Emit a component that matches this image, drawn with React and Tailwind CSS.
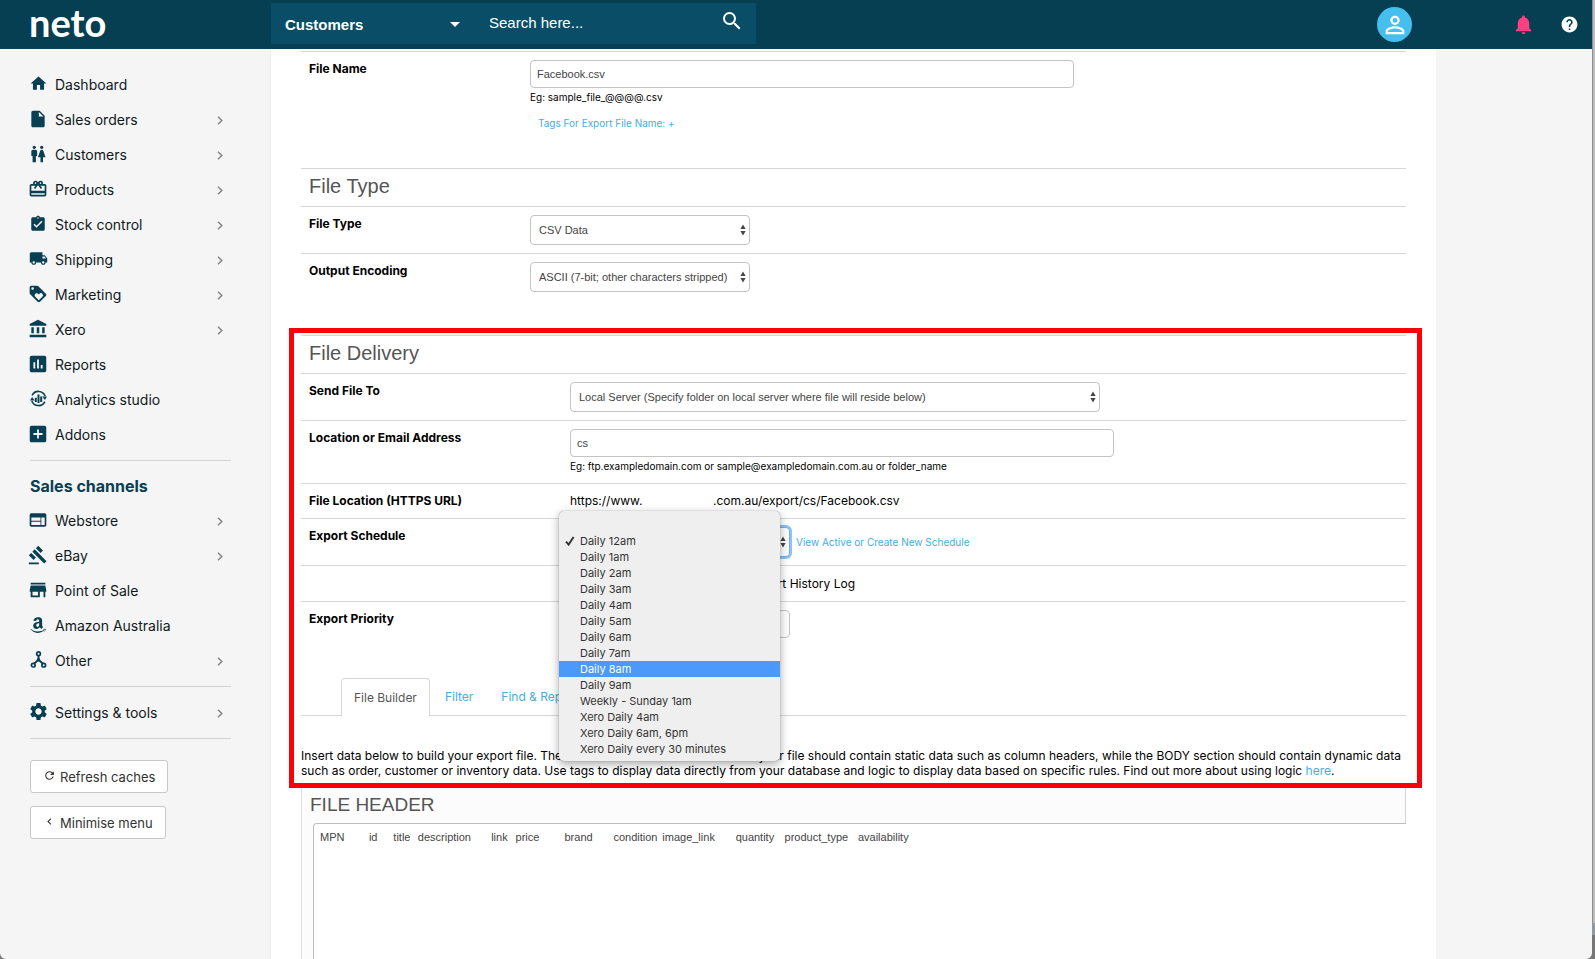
import React from "react";
import {
  MdHome,
  MdInsertDriveFile,
  MdWc,
  MdCardGiftcard,
  MdAssignmentTurnedIn,
  MdLocalShipping,
  MdLoyalty,
  MdAccountBalance,
  MdAssessment,
  MdAddBox,
  MdWeb,
  MdGavel,
  MdStore,
  MdSettings,
  MdRefresh,
  MdChevronLeft,
  MdSearch,
  MdArrowDropDown,
  MdPersonOutline,
  MdNotifications,
  MdHelp,
} from "react-icons/md";
import { FaAmazon } from "react-icons/fa";

function AnalyticsIcon({ size }) {
  return (
    <svg
      width={size}
      height={size}
      viewBox="0 0 24 24"
      fill="none"
      stroke="currentColor"
      strokeWidth="2.2"
      className="shrink-0"
    >
      <path d="M3 7.6A10 10 0 0 1 21.4 8.6" />
      <path d="M21 16.4A10 10 0 0 1 2.6 15.4" />
      <path d="M17.4 9.2H24l-3 5z" fill="currentColor" stroke="none" />
      <path d="M6.6 14.8H0l3-5z" fill="currentColor" stroke="none" />
      <path d="M8.2 11v6M12 6.4v12M15.8 9v8" strokeWidth="2.8" />
    </svg>
  );
}

function NodesIcon({ size }) {
  return (
    <svg
      width={size}
      height={size}
      viewBox="0 0 24 24"
      fill="none"
      stroke="currentColor"
      strokeWidth="2.4"
      className="shrink-0"
    >
      <circle cx="12" cy="3.8" r="2.6" />
      <circle cx="4.6" cy="20" r="2.6" />
      <circle cx="19.4" cy="20" r="2.6" />
      <path d="M12 6.8v6M12 12.4l-6 5.2M12 12.4l6 5.2" strokeWidth="2.8" />
      <circle cx="12" cy="12.4" r="2.4" fill="currentColor" stroke="none" />
    </svg>
  );
}

function Chevron() {
  return (
    <svg width="6" height="9" viewBox="0 0 6 9" fill="none" stroke="currentColor" strokeWidth="1.5">
      <path d="M1 0.7L4.8 4.5L1 8.3" />
    </svg>
  );
}

const mainNav = [
  { label: "Dashboard", icon: MdHome, size: 19 },
  { label: "Sales orders", icon: MdInsertDriveFile, size: 20, more: true },
  { label: "Customers", icon: MdWc, size: 20, more: true },
  { label: "Products", icon: MdCardGiftcard, size: 20, more: true },
  { label: "Stock control", icon: MdAssignmentTurnedIn, size: 18, more: true },
  { label: "Shipping", icon: MdLocalShipping, size: 19, more: true },
  { label: "Marketing", icon: MdLoyalty, size: 20, more: true },
  { label: "Xero", icon: MdAccountBalance, size: 20, more: true },
  { label: "Reports", icon: MdAssessment, size: 22 },
  { label: "Analytics studio", icon: AnalyticsIcon, size: 17 },
  { label: "Addons", icon: MdAddBox, size: 22 },
];

const channelNav = [
  { label: "Webstore", icon: MdWeb, size: 20, more: true },
  { label: "eBay", icon: MdGavel, size: 20, more: true },
  { label: "Point of Sale", icon: MdStore, size: 22 },
  { label: "Amazon Australia", icon: FaAmazon, size: 18 },
  { label: "Other", icon: NodesIcon, size: 17, more: true },
];

const schedules = [
  "Daily 12am",
  "Daily 1am",
  "Daily 2am",
  "Daily 3am",
  "Daily 4am",
  "Daily 5am",
  "Daily 6am",
  "Daily 7am",
  "Daily 8am",
  "Daily 9am",
  "Weekly - Sunday 1am",
  "Xero Daily 4am",
  "Xero Daily 6am, 6pm",
  "Xero Daily every 30 minutes",
];

const columns = [
  "MPN",
  "id",
  "title",
  "description",
  "link",
  "price",
  "brand",
  "condition",
  "image_link",
  "quantity",
  "product_type",
  "availability",
].join("\t");

function NavItem({ label, icon: Icon, size, more }) {
  return (
    <a href="#" className="flex h-[35px] items-center text-[14px] text-[#10191d]">
      <span className="mr-[9px] flex w-4 shrink-0 items-center justify-center pb-[2px] text-[#083f53]">
        <Icon size={size} className="shrink-0" />
      </span>
      <span className="flex-1">{label}</span>
      {more && (
        <span className="pt-[2px] pr-[6px] text-[#858585]">
          <Chevron />
        </span>
      )}
    </a>
  );
}

function Sidebar() {
  return (
    <nav className="w-[271px] shrink-0 border-r border-[#ececec] pt-[18px] pr-[39px] pl-[30px]">
      <div className="pr-[2px]">
        {mainNav.map((n) => (
          <NavItem key={n.label} {...n} />
        ))}
      </div>
      <hr className="mt-2 border-[#d3d3d3]" />
      <h2 className="mt-[15px] mb-[7px] text-[16px] leading-5 font-bold text-[#083f53]">Sales channels</h2>
      <div className="pr-[2px]">
        {channelNav.map((n) => (
          <NavItem key={n.label} {...n} />
        ))}
      </div>
      <hr className="mt-2 border-[#d3d3d3]" />
      <div className="py-[8px] pr-[2px]">
        <NavItem label="Settings & tools" icon={MdSettings} size={21} more />
      </div>
      <hr className="border-[#d3d3d3]" />
      <div className="mt-[21px] flex flex-col items-start gap-[13px] text-[13px] text-[#333]">
        <button className="flex h-[33px] items-center gap-1 rounded-[3px] border border-[#c8c8c8] bg-white px-3 pt-[2px]">
          <MdRefresh size={13} className="mb-1" /> Refresh caches
        </button>
        <button className="flex h-[33px] items-center gap-1 rounded-[3px] border border-[#c8c8c8] bg-white px-3 pt-[2px]">
          <MdChevronLeft size={13} className="mb-1" /> Minimise menu
        </button>
      </div>
    </nav>
  );
}

function TopBar() {
  return (
    <header className="flex h-[49px] shrink-0 items-center bg-[#073f52] text-white">
      <a
        href="#"
        className="flex w-[271px] shrink-0 items-center pb-[6px] pl-[29px] font-['Lato',sans-serif] text-[38px] leading-[46px] font-bold"
      >
        neto
      </a>
      <div className="mb-[2px] flex h-[41px] w-[485px] items-center bg-[#0a4d66] font-['Liberation_Sans',sans-serif] text-[15px]">
        <div className="relative flex w-[202px] items-center">
          <select
            aria-label="Search in"
            className="w-full appearance-none bg-transparent pt-[3px] pl-[14px] font-bold outline-none"
          >
            <option>Customers</option>
          </select>
          <MdArrowDropDown size={24} className="pointer-events-none absolute right-[6px]" />
        </div>
        <input
          type="search"
          aria-label="Search"
          placeholder="Search here..."
          className="min-w-0 flex-1 bg-transparent pl-[16px] outline-none placeholder:text-white"
        />
        <button aria-label="Search" className="mr-[12px] pb-[6px]">
          <MdSearch size={24} />
        </button>
      </div>
      <div className="ml-auto flex items-center pr-[13px]">
        <button
          aria-label="Account"
          className="mr-[100px] flex h-[35px] w-[35px] items-center justify-center rounded-full bg-[#45c0ee]"
        >
          <MdPersonOutline size={28} />
        </button>
        <button aria-label="Notifications" className="mr-[25px] text-[#ff4080]">
          <MdNotifications size={23} />
        </button>
        <button aria-label="Help">
          <MdHelp size={19} />
        </button>
      </div>
    </header>
  );
}

function Row({ label, htmlFor, wide, className = "", children }) {
  return (
    <div
      className={
        "grid border-t border-[#d6d6d6] py-2 " +
        (wide ? "grid-cols-[269px_1fr] " : "grid-cols-[229px_1fr] ") +
        className
      }
    >
      <label htmlFor={htmlFor} className="pl-2 text-[12px] leading-[18px] font-bold text-black">
        {label}
      </label>
      <div>{children}</div>
    </div>
  );
}

function SectionTitle({ children }) {
  return (
    <h2 className="h-[38px] border-t border-[#d6d6d6] pl-2 font-['Liberation_Sans',sans-serif] text-[20px] leading-[34px] text-[#555]">
      {children}
    </h2>
  );
}

function SelectBox({ id, width, value, focused }) {
  return (
    <div className={"relative " + width}>
      <select
        id={id}
        className={
          "h-[30px] w-full appearance-none rounded-[4px] border bg-white pr-5 pl-2 font-['Liberation_Sans',sans-serif] text-[11px] text-[#444] outline-none " +
          (focused ? "border-[#6fb0f5] ring-2 ring-[#8fc2f8]" : "border-[#c4c4c4]")
        }
      >
        <option>{value}</option>
      </select>
      <svg
        width="6"
        height="12"
        viewBox="0 0 6 12"
        className="pointer-events-none absolute top-[9px] right-[4px] text-[#444]"
        fill="currentColor"
      >
        <path d="M3 0.5L5.6 5H.4zM3 11.5L.4 7h5.2z" />
      </svg>
    </div>
  );
}

const inputClass =
  "block h-[28px] rounded-[4px] border border-[#c4c4c4] bg-white px-[6px] font-['Liberation_Sans',sans-serif] text-[11px] text-[#444] outline-none";

function ScheduleMenu() {
  return (
    <ul
      role="listbox"
      aria-label="Export schedule options"
      className="absolute -top-[16px] -left-[11px] z-10 w-[221px] rounded-[5px] bg-[#efefef] pt-[6px] pb-[4px] text-[11px] leading-4 text-[#333] shadow-[0_3px_10px_rgba(0,0,0,0.35),0_0_1px_rgba(0,0,0,0.5)]"
    >
      <li role="option" aria-label="None" aria-selected="false" className="h-4" />
      {schedules.map((s) => (
        <li
          key={s}
          role="option"
          aria-selected={s === "Daily 12am"}
          className={"flex h-4 items-center " + (s === "Daily 8am" ? "bg-[#4a99fb] text-white" : "")}
        >
          <span className="flex w-[21px] justify-center">
            {s === "Daily 12am" && (
              <svg width="10" height="10" viewBox="0 0 10 10" fill="none" stroke="currentColor" strokeWidth="1.9">
                <path d="M1 5.6L3.6 8.6 8.6 1" />
              </svg>
            )}
          </span>
          {s}
        </li>
      ))}
    </ul>
  );
}

function ExportForm() {
  return (
    <main className="flex min-w-0 max-w-[1165px] flex-1 flex-col bg-white pt-[2px] pr-[30px] pl-[30px] text-[12px] text-black">
      <Row label="File Name" htmlFor="file-name" className="h-[117px]">
        <input id="file-name" defaultValue="Facebook.csv" className={inputClass + " w-[544px] max-w-full"} />
        <p className="mt-px text-[10px] leading-4">Eg: sample_file_@@@@.csv</p>
        <a href="#" className="mt-[10px] ml-2 inline-block text-[10px] leading-4 text-[#45aee0]">
          Tags For Export File Name: +
        </a>
      </Row>

      <SectionTitle>File Type</SectionTitle>
      <Row label="File Type" htmlFor="file-type">
        <SelectBox id="file-type" width="w-[220px]" value="CSV Data" />
      </Row>
      <Row label="Output Encoding" htmlFor="encoding">
        <SelectBox id="encoding" width="w-[220px]" value="ASCII (7-bit; other characters stripped)" />
      </Row>

      <section className="relative mt-[35px]">
        <div className="pointer-events-none absolute -top-[7px] -right-[16px] -bottom-[5px] -left-[12px] z-20 border-5 border-[#fb0007]" />
        <SectionTitle>File Delivery</SectionTitle>
        <Row wide label="Send File To" htmlFor="send-to">
          <SelectBox
            id="send-to"
            width="w-[530px] max-w-full"
            value="Local Server (Specify folder on local server where file will reside below)"
          />
        </Row>
        <Row wide label="Location or Email Address" htmlFor="location">
          <input id="location" defaultValue="cs" className={inputClass + " w-[544px] max-w-full"} />
          <p className="mt-px mb-px text-[10px] leading-4">
            Eg: ftp.exampledomain.com or sample@exampledomain.com.au or folder_name
          </p>
        </Row>
        <Row wide label="File Location (HTTPS URL)">
          <p className="leading-[18px]">
            <span className="inline-block w-[143px]">https://www.</span>.com.au/export/cs/Facebook.csv
          </p>
        </Row>
        <Row wide label="Export Schedule" htmlFor="schedule">
          <div className="relative flex items-center gap-[6px]">
            <SelectBox id="schedule" width="w-[220px]" value="Daily 12am" focused />
            <a href="#" className="text-[10px] text-[#45aee0]">
              View Active or Create New Schedule
            </a>
            <ScheduleMenu />
          </div>
        </Row>
        <Row wide>
          <label className="flex w-[285px] items-center justify-end leading-[19px]">
            <input type="checkbox" className="mr-auto" />
            Clear Export History Log
          </label>
        </Row>
        <Row wide label="Export Priority" htmlFor="priority">
          <input id="priority" className={inputClass + " w-[220px]"} />
        </Row>

        <div className="mt-[32px] flex h-[38px] items-stretch border-b border-[#d6d6d6] pl-10">
          <button className="-mb-px rounded-t-[4px] border border-b-0 border-[#d6d6d6] bg-white px-3 text-[#555]">
            File Builder
          </button>
          <button className="px-[15px] text-[#45aee0]">Filter</button>
          <button className="px-[13px] text-[#45aee0]">Find &amp; Replace</button>
        </div>
        <p className="mt-[32px] pb-[5px] leading-[15px]">
          Insert data below to build your export file. The HEADER and FOOTER sections of your file should contain
          static data such as column headers, while the BODY section should contain dynamic data such as order, customer
          or inventory data. Use tags to display data directly from your database and logic to display data based on
          specific rules. Find out more about using logic{" "}
          <a href="#" className="text-[#45aee0]">
            here
          </a>
          .
        </p>
      </section>

      <section className="flex flex-1 flex-col border-l border-[#e2e2e2] bg-white">
        <h2 className="h-[40px] border-r border-[#d6d6d6] bg-[#fcfcfc] pl-[8px] font-['Liberation_Sans',sans-serif] text-[19px] leading-[44px] text-[#555]">
          <label htmlFor="header-body">FILE HEADER</label>
        </h2>
        <div className="flex flex-1 bg-[#fcfcfc] pl-[11px]">
          <textarea
            id="header-body"
            defaultValue={columns}
            className="flex-1 resize-none rounded-tl-[4px] border-t border-l border-[#bdbdbd] bg-white px-[6px] pt-[4px] font-['Liberation_Sans',sans-serif] text-[11px] leading-[18px] text-[#444] outline-none [tab-size:8]"
          />
        </div>
      </section>
    </main>
  );
}

export default function App() {
  return (
    <div className="flex min-h-screen bg-[#777] font-['Inter',sans-serif]">
      <div className="flex min-w-0 flex-1 flex-col overflow-hidden rounded-b-[6px] bg-[#f5f5f5]">
        <TopBar />
        <div className="flex flex-1">
          <Sidebar />
          <ExportForm />
        </div>
      </div>
      <div className="flex w-[3px] flex-col">
        <div className="flex-1 border-l border-[#8f8f8f] bg-[#bdbdbd]" />
        <div className="h-3 bg-[#8d9aa3]" />
        <div className="h-6 bg-[#777]" />
      </div>
    </div>
  );
}
